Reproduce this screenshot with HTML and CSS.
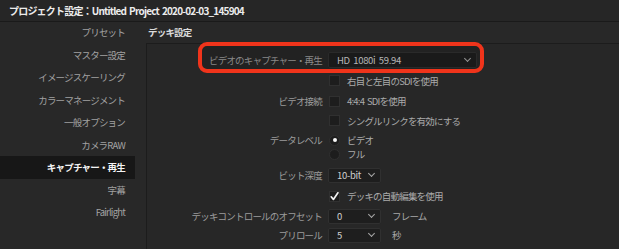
FILE: index.html
```html
<!DOCTYPE html>
<html lang="ja">
<head>
  <meta charset="UTF-8" />
  <title>プロジェクト設定</title>
  <link rel="stylesheet" href="styles.css">
</head>
<body>
  <div class="titlebar">プロジェクト設定：Untitled Project 2020-02-03_145904</div>
  <div class="window">
    <ul class="sidebar">
      <li>プリセット</li>
      <li>マスター設定</li>
      <li>イメージスケーリング</li>
      <li>カラーマネージメント</li>
      <li>一般オプション</li>
      <li>カメラRAW</li>
      <li class="active">キャプチャー・再生</li>
      <li>字幕</li>
      <li>Fairlight</li>
    </ul>
    <div class="main">
      <div class="section-head">デッキ設定</div>
      <div class="panel">
        <div class="form">
          <label class="label">ビデオのキャプチャー・再生</label>
          <div class="field">
            <div class="select wide"><span>HD 1080i 59.94</span><i class="chev"></i></div>
          </div>

          <span></span>
          <div class="field"><span class="box"></span><span class="opt">右目と左目のSDIを使用</span></div>

          <label class="label">ビデオ接続</label>
          <div class="field"><span class="box"></span><span class="opt">4:4:4 SDIを使用</span></div>

          <span></span>
          <div class="field"><span class="box"></span><span class="opt">シングルリンクを有効にする</span></div>

          <label class="label top">データレベル</label>
          <div class="radios">
            <div class="field"><span class="radio on"></span><span class="opt">ビデオ</span></div>
            <div class="field"><span class="radio"></span><span class="opt">フル</span></div>
          </div>

          <label class="label">ビット深度</label>
          <div class="field">
            <div class="select small"><span>10-bit</span><i class="chev"></i></div>
          </div>

          <span></span>
          <div class="field">
            <span class="box checked">
              <svg width="11" height="11" viewBox="0 0 11 11"><path d="M2.2 5.8 L4.4 8.4 L8.9 1.8" fill="none" stroke="#f2f2f2" stroke-width="1.7" stroke-linecap="round" stroke-linejoin="round"/></svg>
            </span>
            <span class="opt">デッキの自動編集を使用</span>
          </div>

          <label class="label">デッキコントロールのオフセット</label>
          <div class="field">
            <div class="select small"><span>0</span><i class="chev"></i></div>
            <span class="unit">フレーム</span>
          </div>

          <label class="label">プリロール</label>
          <div class="field">
            <div class="select small"><span>5</span><i class="chev"></i></div>
            <span class="unit">秒</span>
          </div>
        </div>
        <div class="highlight"></div>
      </div>
    </div>
  </div>
</body>
</html>
```

FILE: styles.css
```css
body {
  margin: 0;
  width: 619px;
  height: 249px;
  overflow: hidden;
  background: #282828;
  color: #9c9c9c;
  font-family: "Noto Sans CJK JP", "Noto Sans", sans-serif;
  font-size: 9.5px;
  letter-spacing: -0.8px;
  word-spacing: 1.5px;
}
.titlebar {
  height: 21px;
  line-height: 22px;
  padding-left: 9px;
  background: #262626;
  border-bottom: 1px solid #1a1a1a;
  color: #ececec;
  font-size: 10px;
  font-weight: 700;
  letter-spacing: -0.8px;
  word-spacing: 1.5px;
}
.window {
  display: flex;
  height: 227px;
}
.sidebar {
  list-style: none;
  margin: 0;
  padding: 0;
  width: 146px;
  flex-shrink: 0;
}
.sidebar li {
  width: 135px;
  height: 22.5px;
  line-height: 22.5px;
  box-sizing: border-box;
  padding-right: 10px;
  text-align: right;
  color: #a2a2a2;
}
.sidebar li:first-child {
  margin-top: -1px;
}
.sidebar li.active {
  background: #171717;
  color: #f4f4f4;
  font-weight: 700;
}
.main {
  flex: 1;
  display: flex;
  flex-direction: column;
}
.section-head {
  height: 21px;
  line-height: 21px;
  padding-left: 2px;
  color: #dcdcdc;
  font-weight: 700;
}
.panel {
  position: relative;
  flex: 1;
  border-top: 1px solid #1c1c1c;
  border-left: 1px solid #1c1c1c;
  background: #272727;
}
.form {
  display: grid;
  grid-template-columns: 175px 1fr;
  grid-template-rows: 20px 21px 20px 19px 34px 22px 20px 20px 18px;
  column-gap: 6px;
  align-items: center;
  padding-top: 6px;
}
.label {
  text-align: right;
  line-height: 14px;
}
.label.top {
  align-self: start;
  margin-top: 3px;
}
.field {
  display: flex;
  align-items: center;
  height: 14px;
}
.radios {
  align-self: start;
  margin-top: 3px;
}
.box, .radio {
  width: 11px;
  height: 11px;
  box-sizing: border-box;
  background: #1d1d1d;
  border: 1px solid #303030;
  margin-left: 1px;
  flex-shrink: 0;
}
.box svg {
  display: block;
  margin: -1px;
}
.radio {
  border-radius: 50%;
  position: relative;
}
.radio.on::after {
  content: "";
  position: absolute;
  left: 2.5px;
  top: 2.5px;
  width: 4px;
  height: 4px;
  border-radius: 50%;
  background: #fafafa;
}
.opt {
  margin-left: 7px;
  color: #ababab;
}
.select {
  display: flex;
  align-items: center;
  justify-content: space-between;
  box-sizing: border-box;
  background: #1e1e1e;
  border: 1px solid #303030;
  border-radius: 2px;
  padding: 0 6px 0 8px;
  color: #cfcfcf;
  letter-spacing: -0.3px;
}
.select.wide {
  width: 149px;
  height: 16px;
}
.select.small {
  width: 53px;
  height: 15px;
}
.chev {
  width: 4px;
  height: 4px;
  border-right: 1.2px solid #a8a8a8;
  border-bottom: 1.2px solid #a8a8a8;
  transform: rotate(45deg);
  margin-top: -3px;
}
.unit {
  margin-left: 11px;
  color: #a8a8a8;
}
.highlight {
  position: absolute;
  left: 51px;
  top: -2px;
  width: 286px;
  height: 31px;
  box-sizing: border-box;
  border: 4px solid #f0341b;
  border-radius: 9px;
  background: rgba(0, 0, 0, 0.12);
}
```
